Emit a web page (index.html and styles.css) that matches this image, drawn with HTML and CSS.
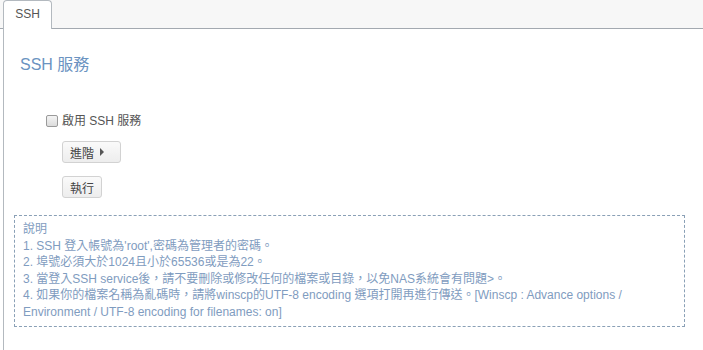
FILE: index.html
```html
<!DOCTYPE html>
<html lang="zh-Hant">
<head>
<meta charset="utf-8">
<title>SSH</title>
<link rel="stylesheet" href="styles.css">
</head>
<body>
<div class="tabbar">
  <div class="tab active">SSH</div>
</div>
<div class="panel">
  <h2 class="title">SSH 服務</h2>
  <label class="check-row"><input type="checkbox" class="check"><span>啟用 SSH 服務</span></label>
  <div class="btn-row first"><button class="btn">進階<span class="caret"></span></button></div>
  <div class="btn-row"><button class="btn">執行</button></div>
  <div class="note">
    <div>說明</div>
    <div>1. SSH 登入帳號為'root',密碼為管理者的密碼。</div>
    <div>2. 埠號必須大於1024且小於65536或是為22。</div>
    <div>3. 當登入SSH service後，請不要刪除或修改任何的檔案或目錄，以免NAS系統會有問題&gt;。</div>
    <div>4. 如果你的檔案名稱為亂碼時，請將winscp的UTF-8 encoding 選項打開再進行傳送。[Winscp : Advance options / Environment / UTF-8 encoding for filenames: on]</div>
  </div>
</div>
</body>
</html>
```
FILE: styles.css
```css
html, body {
  margin: 0;
  padding: 0;
  background: #fff;
}
body {
  font-family: "Liberation Sans", Arial, "Noto Sans CJK TC", sans-serif;
  font-size: 12px;
  color: #555;
  width: 703px;
  height: 350px;
  overflow: hidden;
}
.tabbar {
  height: 28px;
  background: #f7f7f7;
  border-bottom: 1px solid #a3a9b0;
  padding-left: 3px;
  display: flex;
  align-items: flex-end;
}
.tab {
  box-sizing: border-box;
  width: 49px;
  height: 29px;
  margin-bottom: -1px;
  border: 1px solid #b3b9bf;
  border-bottom: none;
  border-radius: 4px 4px 0 0;
  background: #fff;
  color: #555;
  font-size: 12px;
  line-height: 27px;
  text-align: center;
}
.panel {
  margin-left: 3px;
  border-left: 1px solid #b3b9bf;
  padding: 0 18px 0 10px;
  height: 321px;
  display: flex;
  flex-direction: column;
  align-items: flex-start;
}
.title {
  margin: 26px 0 0 6px;
  font-size: 16px;
  line-height: 20px;
  font-weight: normal;
  color: #6b93c1;
}
.check-row {
  margin-top: 36px;
  margin-left: 32px;
  display: flex;
  align-items: center;
  gap: 4px;
  line-height: 20px;
  color: #555;
}
.check {
  appearance: none;
  -webkit-appearance: none;
  box-sizing: border-box;
  margin: 0;
  width: 12px;
  height: 12px;
  border: 1px solid #9a9a9a;
  border-radius: 2px;
  background: linear-gradient(#f4f4f4, #dcdcdc);
}
.btn-row {
  margin-top: 13px;
  margin-left: 48px;
}
.btn-row.first {
  margin-top: 10px;
}
.btn {
  box-sizing: border-box;
  height: 22px;
  padding: 0 7px;
  border: 1px solid #d2d2d2;
  border-radius: 3px;
  background: linear-gradient(#fafafa, #ededed);
  font-family: "Liberation Sans", Arial, "Noto Sans CJK TC", sans-serif;
  font-size: 12px;
  color: #444;
  display: inline-flex;
  align-items: center;
}
.caret {
  display: inline-block;
  width: 0;
  height: 0;
  border-left: 4px solid #555;
  border-top: 4px solid transparent;
  border-bottom: 4px solid transparent;
  margin-left: 6px;
  margin-right: 9px;
}
.note {
  box-sizing: border-box;
  margin-top: 17px;
  width: 671px;
  border: 1px dashed #8aa0b6;
  padding: 5px 8px 5px 8px;
  color: #7f9cc0;
  font-size: 12px;
  line-height: 16.6px;
}
```
